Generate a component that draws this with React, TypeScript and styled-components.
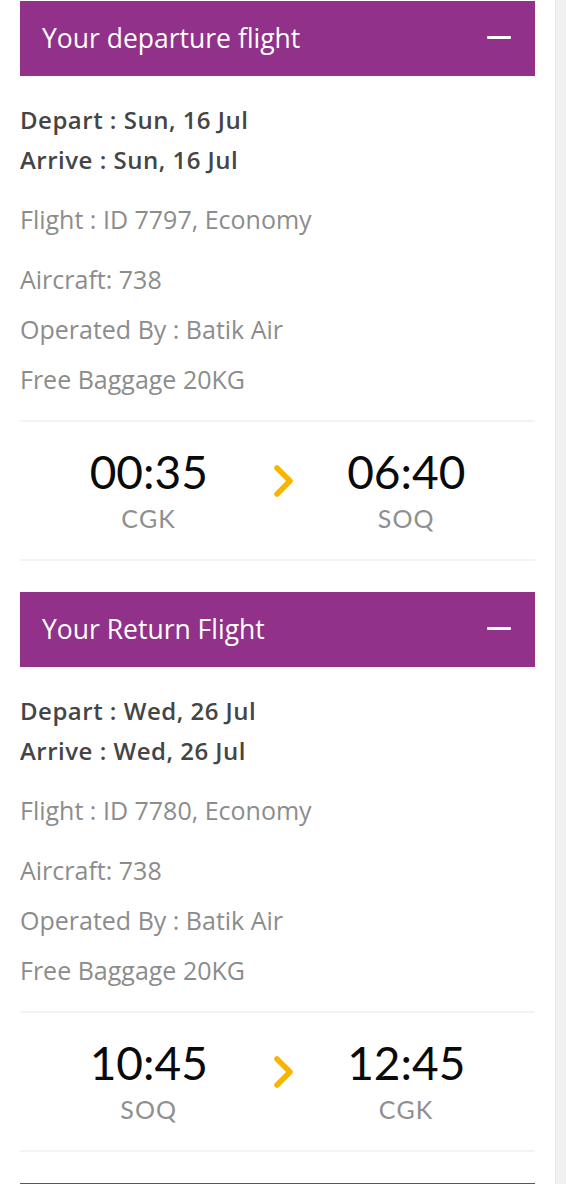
import React from "react";
import styled, { createGlobalStyle } from "styled-components";

const GlobalStyle = createGlobalStyle`
  html, body {
    margin: 0;
    padding: 0;
    background: #ffffff;
    overflow: hidden;
  }
  body {
    font-family: "Open Sans", Lato, Arial, sans-serif;
  }
  * { box-sizing: border-box; }
`;

const Page = styled.div`
  display: flex;
  width: 566px;
  height: 1184px;
  overflow: hidden;
`;

const Main = styled.main`
  flex: 1;
  padding: 1px 20px 0;
`;

const ScrollTrack = styled.div`
  width: 11px;
  flex: none;
  background: #f1f1f1;
  border-left: 1px solid #e8e8e8;
`;

const Section = styled.section`
  margin-bottom: 31px;
`;

const Header = styled.div`
  height: 75px;
  background: #923189;
  color: #ffffff;
  display: flex;
  align-items: center;
  justify-content: space-between;
  padding: 0 24px 0 22px;
`;

const Title = styled.h2`
  margin: 0 0 1px;
  font-size: 26.5px;
  font-weight: 400;
`;

const Minus = styled.span`
  display: block;
  width: 24px;
  height: 3px;
  margin-bottom: 3px;
  background: #ffffff;
  border-radius: 1px;
`;

const Details = styled.div`
  padding: 24px 0 26px;
  border-bottom: 2px solid #f3f3f3;
`;

const DateLine = styled.div`
  font-size: 24px;
  line-height: 40px;
  font-weight: 600;
  letter-spacing: 0.5px;
  color: #454545;
`;

const InfoList = styled.div`
  margin-top: 24px;
  display: flex;
  flex-direction: column;
  gap: 20px;
`;

const Info = styled.div<{ $extra?: boolean }>`
  font-size: 25px;
  line-height: 30px;
  color: #8c8c8c;
  margin-bottom: ${(p) => (p.$extra ? "10px" : "0")};
`;

const Times = styled.div`
  position: relative;
  display: grid;
  grid-template-columns: 1fr 1fr;
  padding: 25px 0 26px;
  border-bottom: 2px solid #f3f3f3;
`;

const Stop = styled.div`
  display: flex;
  flex-direction: column;
  align-items: center;
`;

const Clock = styled.div`
  font-family: Lato, "Open Sans", sans-serif;
  font-size: 46px;
  line-height: 50px;
  color: #0a0a0a;
  margin-bottom: 6px;
`;

const Code = styled.div`
  font-family: Lato, "Open Sans", sans-serif;
  font-size: 25px;
  line-height: 30px;
  color: #8f8f8f;
  letter-spacing: 1.2px;
`;

const Arrow = styled.svg`
  position: absolute;
  left: 252px;
  top: 41px;
  width: 24px;
  height: 36px;
`;

type Flight = {
  title: string;
  date: string;
  flight: string;
  depTime: string;
  depCode: string;
  arrTime: string;
  arrCode: string;
};

const flights: Flight[] = [
  {
    title: "Your departure flight",
    date: "Sun, 16 Jul",
    flight: "ID 7797, Economy",
    depTime: "00:35",
    depCode: "CGK",
    arrTime: "06:40",
    arrCode: "SOQ",
  },
  {
    title: "Your Return Flight",
    date: "Wed, 26 Jul",
    flight: "ID 7780, Economy",
    depTime: "10:45",
    depCode: "SOQ",
    arrTime: "12:45",
    arrCode: "CGK",
  },
];

function FlightCard({ f }: { f: Flight }) {
  return (
    <Section>
      <Header>
        <Title>{f.title}</Title>
        <Minus />
      </Header>
      <Details>
        <DateLine>Depart : {f.date}</DateLine>
        <DateLine>Arrive : {f.date}</DateLine>
        <InfoList>
          <Info $extra>Flight : {f.flight}</Info>
          <Info>Aircraft: 738</Info>
          <Info>Operated By : Batik Air</Info>
          <Info>Free Baggage 20KG</Info>
        </InfoList>
      </Details>
      <Times>
        <Stop>
          <Clock>{f.depTime}</Clock>
          <Code>{f.depCode}</Code>
        </Stop>
        <Stop>
          <Clock>{f.arrTime}</Clock>
          <Code>{f.arrCode}</Code>
        </Stop>
        <Arrow viewBox="0 0 24 36">
          <polyline
            points="5,5 18,18 5,31"
            fill="none"
            stroke="#f7b500"
            strokeWidth="5.5"
            strokeLinecap="round"
            strokeLinejoin="round"
          />
        </Arrow>
      </Times>
    </Section>
  );
}

export default function App() {
  return (
    <>
      <GlobalStyle />
      <Page>
        <Main>
          {flights.map((f) => (
            <FlightCard key={f.title} f={f} />
          ))}
          <Header />
        </Main>
        <ScrollTrack />
      </Page>
    </>
  );
}
